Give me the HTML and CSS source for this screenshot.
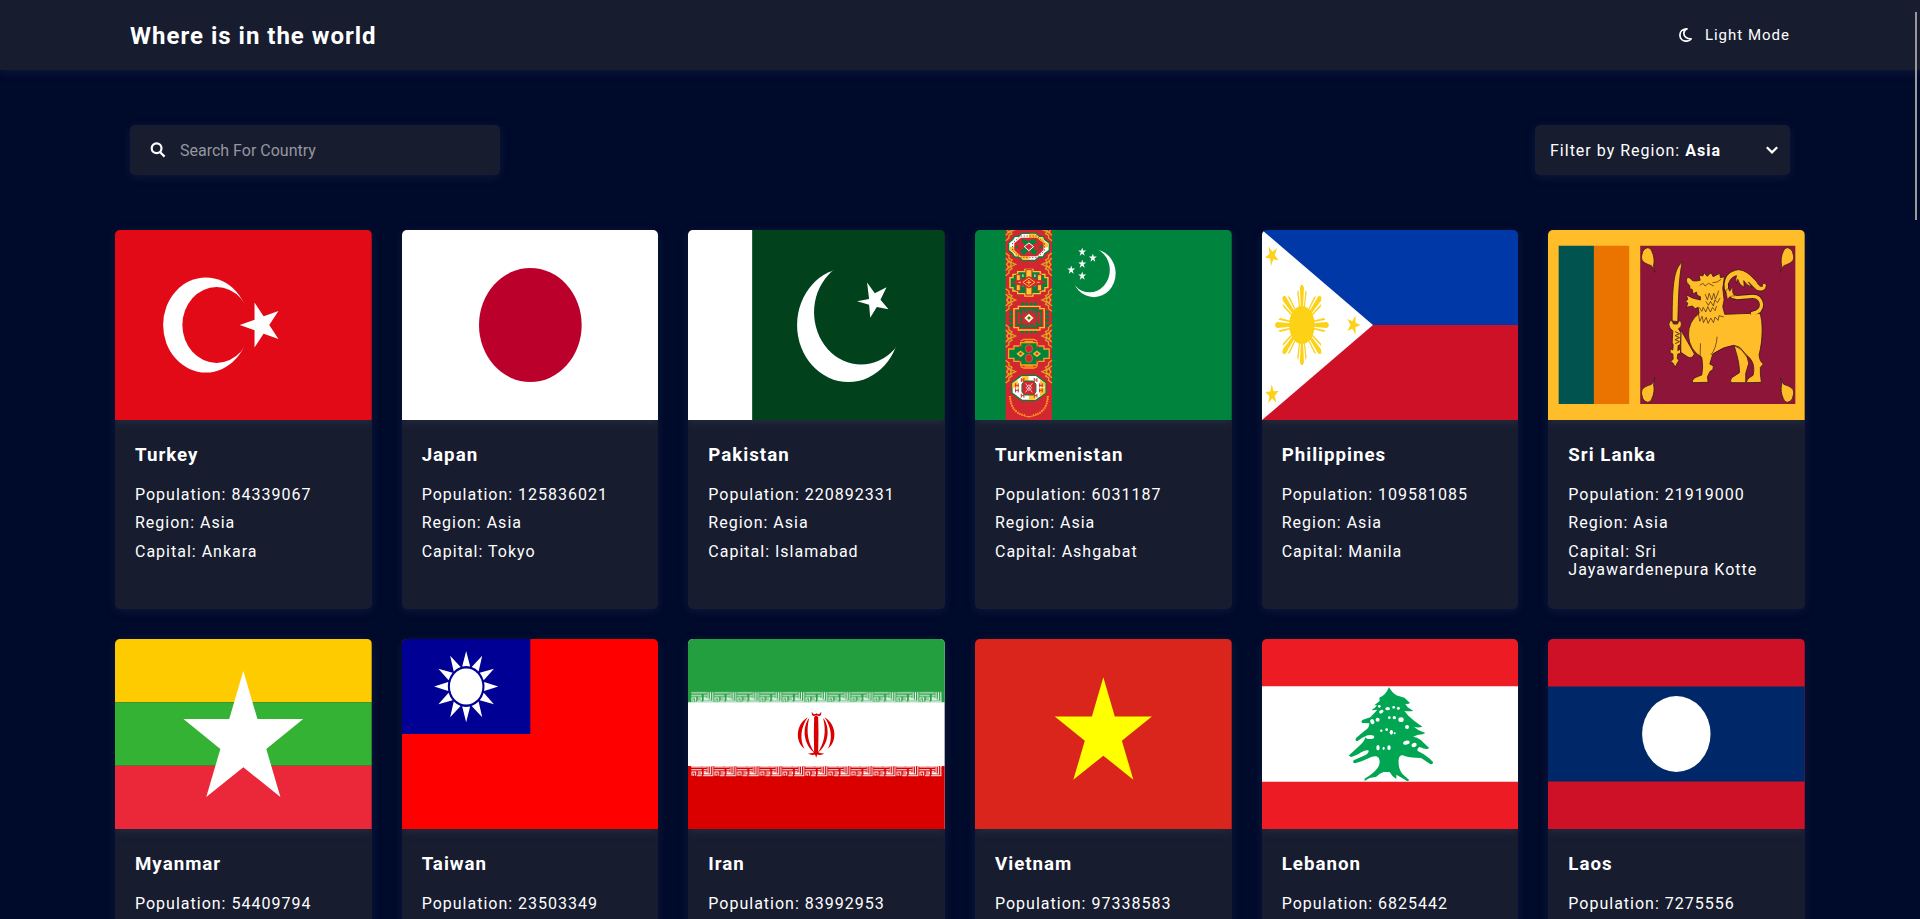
FILE: index.html
```html
<!DOCTYPE html>
<html lang="en">
<head>
<meta charset="utf-8">
<title>Where is in the world</title>
<link rel="stylesheet" href="styles.css">
</head>
<body>
<header class="header">
  <div class="bar">
    <h1 class="title">Where is in the world</h1>
    <button class="mode"><svg class="moon" viewBox="0 0 13 14"><path d="M8 .8C3.600 .8 .9 3.600 .9 7 .9 10.600 3.600 13.200 7.200 13.200 9.400 13.200 11.200 12.400 12.200 10.900 8 11.200 4.800 8.600 4.800 5.200 4.900 3.400 6.300 1.600 8 .8z"/></svg>Light Mode</button>
  </div>
</header>
<main>
  <div class="tools">
    <label class="search">
      <svg class="glass" viewBox="0 0 16 16"><circle cx="6.6" cy="6.3" r="4.9"/><path d="M10.2 10.2L14.6 14.6"/></svg>
      <input class="field" type="text" placeholder="Search For Country">
    </label>
    <div class="filter"><span>Filter by Region: <b>Asia</b></span><svg class="chev" viewBox="0 0 12 8"><path d="M.8 1.200L6 6.400L11.200 1.200"/></svg></div>
  </div>
  <div class="grid">
    <article class="card">
      <svg class="flag" viewBox="0 0 1200 800" preserveAspectRatio="none">
        <defs><polygon id="star" points="0,-1 .2245,-.309 .951,-.309 .363,.118 .588,.809 0,.382 -.588,.809 -.363,.118 -.951,-.309 -.2245,-.309"/></defs>
        <path fill="#e30a17" d="M0 0h1200v800H0z"/><circle cx="425" cy="400" r="200" fill="#fff"/><circle cx="475" cy="400" r="160" fill="#e30a17"/>
        <path fill="#fff" d="M583.3 400l180.9 58.8-111.8-153.9v190.2l111.8-153.9z"/>
      </svg>
      <div class="info"><h2>Turkey</h2><p>Population: 84339067</p><p>Region: Asia</p><p>Capital: Ankara</p></div>
    </article>
    <article class="card">
      <svg class="flag" viewBox="0 0 900 600" preserveAspectRatio="none"><path fill="#fff" d="M0 0h900v600H0z"/><circle cx="450" cy="300" r="180" fill="#ba002b"/></svg>
      <div class="info"><h2>Japan</h2><p>Population: 125836021</p><p>Region: Asia</p><p>Capital: Tokyo</p></div>
    </article>
    <article class="card">
      <svg class="flag" viewBox="0 0 900 600" preserveAspectRatio="none"><path fill="#01411c" d="M0 0h900v600H0z"/><path fill="#fff" d="M0 0h225v600H0z"/><circle cx="562.5" cy="300" r="180" fill="#fff"/><circle cx="607" cy="260" r="165" fill="#01411c"/>
        <path fill="#fff" d="M593 225L635 218 628 166 655 200 696 181 675 220 703 250 662 243 639 277 635 236z"/></svg>
      <div class="info"><h2>Pakistan</h2><p>Population: 220892331</p><p>Region: Asia</p><p>Capital: Islamabad</p></div>
    </article>
    <article class="card">
      <svg class="flag" viewBox="45 30 771 570" preserveAspectRatio="none">
        <defs>
          <g id="corner" fill="none" stroke="#dba522" stroke-width="4"><path d="M0-34l10 8v8l9 5-4 6 15 7-15 7 4 6-9 5v8l-10 8M0-18l6 5 2 7-5 6 5 6-2 7-6 5M9-12l8 12-8 12"/></g>
          <g id="side"><use href="#corner" x="137"/><use href="#corner" transform="matrix(-1 0 0 1 276 0)"/></g>
          <g id="hook" fill="none" stroke-width="3"><path d="M-4-6v12M4-6v12M-4 0h8"/></g>
        </defs>
        <path fill="#00843d" d="M45 30h771v570H45z"/><path fill="#d22730" d="M137 30h139v570H137z"/>
        <use href="#side" y="28"/><use href="#side" y="133"/><use href="#side" y="240"/><use href="#side" y="348"/><use href="#side" y="455"/>
        <g stroke-width="3">
          <path fill="#fff" stroke="#00843d" stroke-width="4" d="M186 40h42l10 9h12l4 10 14 10v22l-14 10-4 10h-12l-12 10h-38l-12-10h-12l-6-10-12-10V69l12-10 6-10h12z"/>
          <path fill="#ffc72c" d="M207 41h18l12 11h12l4 12 13 8v10h-59zM207 81h-58v9l14 9 4 10h12l10 10h18z"/>
          <path fill="#d22730" d="M183 53h48l20 17v20l-20 19h-48l-20-19V70z"/><path fill="#00843d" d="M188 56l18 8 18-8 10 16 16 8-16 9-8 16-19-7-19 7-8-16-17-9 17-8z"/>
          <path fill="#d22730" d="M172 72l14-8 10 12-6 12-14 2zM228 68l12 6-4 18-14-4-6-12zM198 98l9-8 9 8-9 10z"/>
          <path fill="#d22730" stroke="#fff" d="M207 69l14 11-14 12-14-12z"/>
          <path fill="none" stroke="#d22730" stroke-dasharray="4 5" d="M182 48h48l24 21v23l-24 21h-48l-24-21V69z"/>
        </g>
        <g stroke-width="3">
          <path fill="#00843d" stroke="#ffc72c" stroke-width="4" d="M195 148h24v7h22v8h14v10h9v30h-9v10h-14v8h-22v7h-24v-7h-22v-8h-14v-10h-9v-30h9v-10h14v-8h22z"/>
          <path fill="#ffc72c" stroke="#d22730" d="M198 149h18v76h-18zM169 164h12v18h-12zM233 164h12v18h-12zM169 194h12v18h-12zM233 194h12v18h-12z"/>
          <path fill="none" stroke="#fff" stroke-dasharray="8 20" d="M189 163v54M225 163v54"/>
          <path fill="#d22730" stroke="#d22730" d="M155 187l22-4 30-13 30 13 22 4-22 4-30 13-30-13z"/><path fill="none" stroke="#ffc72c" d="M207 174l18 13-18 13-18-13zM200 187h14M207 180v14M175 187h8M231 187h8"/>
        </g>
        <g stroke-width="4" fill="none">
          <path stroke="#00843d" stroke-width="10" stroke-dasharray="9 4" d="M183 253h48M183 334h48M153 272v50M262 272v50"/>
          <path fill="#d22730" stroke="#ffc72c" d="M175 259h65v7h13v57h-13v7h-65v-7h-13v-57h13z"/>
          <path stroke="#00843d" d="M182 267h50v6h12v42h-12v7h-50v-7h-12v-42h12z"/><path stroke="#00843d" stroke-width="8" stroke-dasharray="4 4" d="M184 274h47v41h-47z"/>
          <path stroke="#fff" fill="#ffc72c" d="M207 284l11 10-11 11-11-11z"/><circle cx="207" cy="294" r="4" fill="#00843d" stroke="none"/>
        </g>
        <g stroke-width="4">
          <path fill="#00843d" stroke="#ff9e1b" d="M182 368h50v10h20v9h16v28h-16v9h-20v11h-50v-11h-20v-9h-16v-28h16v-9h20z"/>
          <path fill="none" stroke="#ff9e1b" d="M182 363l10-5h30l10 5M182 439l10 5h30l10-5M194 364h26M194 438h26"/>
          <g fill="#d22730" stroke="#b9a63b" stroke-width="1.500"><ellipse cx="207" cy="386" rx="11" ry="12"/><ellipse cx="207" cy="415" rx="11" ry="12"/><path fill="#ffc72c" d="M182 392l12 9-12 10-12-10zM231 392l12 9-12 10-12-10z"/><path d="M182 396l5 5-5 5-5-5zM231 396l5 5-5 5-5-5z"/></g>
          <path fill="#d22730" d="M171 385l12-10v8zM243 385l-12-10v8zM171 417l12 10v-8zM243 417l-12 10v-8z"/>
        </g>
        <g stroke-width="3">
          <path fill="#fff" stroke="#00843d" stroke-width="4" d="M186 466h42l30 22v31l-30 22h-42l-30-22v-31z"/>
          <path fill="#ffc72c" d="M186 468l20 0v18h-20zM207 522h20v17h-20zM157 490l16-10v23h-16zM240 504h16v14l-16 12zM240 480l16 9v12h-16z"/>
          <path fill="#d22730" stroke="#00843d" d="M194 483h26l8 9v24l-8 9h-26l-8-9v-24z"/>
          <path fill="none" stroke="#fff" stroke-width="2" d="M197 490l20 27M217 490l-20 27M207 494l8 9-8 9-8-9z"/>
          <g stroke="#d22730"><use href="#hook" x="188" y="480"/><use href="#hook" x="227" y="480"/><use href="#hook" x="171" y="496"/><use href="#hook" x="243" y="496"/><use href="#hook" x="171" y="511"/><use href="#hook" x="243" y="511"/><use href="#hook" x="188" y="527"/><use href="#hook" x="227" y="527"/></g>
        </g>
        <g fill="none" stroke="#ff9e1b"><path stroke-width="7" stroke-dasharray="3 4" d="M150 528q2 50 45 58M264 528q-2 50-45 58"/><path stroke-width="2.5" d="M150 528q2 50 45 60l18 3M264 528q-2 50-45 60l-18 3"/></g>
        <ellipse cx="402" cy="160" rx="65.5" ry="71.5" fill="#fff"/><ellipse cx="389" cy="150" rx="61" ry="67" fill="#00843d"/>
        <g fill="#fff"><use href="#star" transform="translate(367 96) scale(12.500 13.500)"/><use href="#star" transform="translate(399 114) scale(12.500 13.500)"/><use href="#star" transform="translate(367 132) scale(12.500 13.500)"/><use href="#star" transform="translate(334 150) scale(12.500 13.500)"/><use href="#star" transform="translate(367 168) scale(12.500 13.500)"/></g>
      </svg>
      <div class="info"><h2>Turkmenistan</h2><p>Population: 6031187</p><p>Region: Asia</p><p>Capital: Ashgabat</p></div>
    </article>
    <article class="card">
      <svg class="flag" viewBox="36 30 768 570" preserveAspectRatio="none">
        <defs><path id="ray" d="M-5-50L-9-112-4-120H4L9-112 5-50zM-13-50L-21-98-16-106-8-50zM13-50L21-98 16-106 8-50z"/></defs>
        <path fill="#0038a8" d="M36 30h768v285H36z"/><path fill="#ce1126" d="M36 315h768v285H36z"/><path fill="#fff" d="M36 30l332 285L36 600z"/>
        <g fill="#fcd116"><g transform="translate(155.500 315) scale(.667 1)"><circle r="57"/><use href="#ray"/><use href="#ray" transform="rotate(45)"/><use href="#ray" transform="rotate(90)"/><use href="#ray" transform="rotate(135)"/><use href="#ray" transform="rotate(180)"/><use href="#ray" transform="rotate(225)"/><use href="#ray" transform="rotate(270)"/><use href="#ray" transform="rotate(315)"/></g>
        <use href="#star" transform="translate(66 107) scale(.69 1) rotate(-28) scale(31)"/><use href="#star" transform="translate(309 315) scale(.69 1) rotate(18) scale(31)"/><use href="#star" transform="translate(66 524) scale(.69 1) rotate(-3) scale(31)"/></g>
      </svg>
      <div class="info"><h2>Philippines</h2><p>Population: 109581085</p><p>Region: Asia</p><p>Capital: Manila</p></div>
    </article>
    <article class="card">
      <svg class="flag" viewBox="54 30 771 570" preserveAspectRatio="none">
        <defs><path id="leaf" d="M375 157C370 143 369 137 356 134 342 128 334 124 335 108L339 94Q344 84 354 83 364 84 366 94C372 106 375 122 371 137z"/></defs>
        <path fill="#ffbe29" d="M54 30h771v570H54z"/><path fill="#00534e" d="M86 77h106v475H86z"/><path fill="#eb7400" d="M192 77h106v475H192z"/><path fill="#8d153a" d="M331 77h466v475H331z"/>
        <g fill="#ffbe29" stroke="#3c1a1c" stroke-width="2.500" stroke-linejoin="round">
          <use href="#leaf"/><use href="#leaf" transform="matrix(-1 0 0 1 1127 0)"/><use href="#leaf" transform="matrix(1 0 0 -1 0 630)"/><use href="#leaf" transform="matrix(-1 0 0 -1 1127 630)"/>
          <path d="M457 127C434 145 427 185 427 303L444 305C446 240 446 180 457 127z"/>
          <path d="M453 330L494 402Q486 418 474 411L453 397z"/>
          <path d="M418 310q0-10 9-8l4 10h12l4-10q8-1 8 10 0 11-9 14l7 12-1 35-7 4-1 15 8-6v14l-8 2-2 14 6 4-6 10-6 12-6-12-8-6 8-6-1-16-8-4v-12l8 4 1-16-3-6 2-36q-10-5-12-18z"/>
          <path fill="none" d="M436 335l13 6-13 6 13 6-13 6 13 6-13 6"/>
          <path d="M612 374C620 400 630 430 629 458L606 473Q600 482 604 488L648 488 648 460 657 430 651 405 640 385z"/>
          <path d="M585 283L690 279C700 300 700 360 688 405Q690 425 701 432L692 442 692 462 695 487 651 488Q648 478 670 466C676 440 670 420 650 405L630 382 612 376Q580 380 549 402L540 432 551 438 549 450 541 454 533 470 535 487 488 488Q485 475 508 468L516 465Q521 440 516 412 478 390 476 345 475 305 508 280L505 262 496 266 488 258 470 262 474 249 467 245 474 238 469 224 488 234 512 240 512 230 502 226 500 216 490 222 487 208 480 207 480 198Q466 185 470 176 478 168 484 178 487 186 511 181L508 165 519 168 523 158 532 169 544 158 550 170 570 160 572 173 584 170 579 205 583 240 579 260z"/>
          <path fill="none" stroke-width="2" d="M506 282l4 22 7-15 4 19 8-16 6 18 8-16 8 14 5-17 9 10 3-14 14 4M508 262l8 12 4-12 8 14 6-16 8 16 6-14 8 10 4-14M526 222l7 18 5-20 8 20 6-20 5 18 10-26M528 244l8 12 6-12 9 14 4-18 8 8 8-14M510 196l10-6 6 8 10-8 16 8M548 188l14-2 12-8M512 370l-1 42M562 350Q560 385 543 405M616 378l20 12 16 22"/>
          <path fill="none" stroke="#3c1a1c" stroke-width="15" stroke-linecap="round" d="M668 280.500Q696 276 695.500 253 691 228 668 229L622 233Q597 231 590 206 586 176 604 163"/>
          <path d="M586 190C588 170 600 152 626 149 650 151 664 168 680 184 687 197 692 201 698 199 697 188 706 187 710 196 708 212 696 217 680 210L656 186 667 202Q650 196 642 182L644 202Q628 196 624 178L620 190Q616 178 620 167 602 172 597 190z"/>
          <path fill="none" stroke="#ffbe29" stroke-width="10" stroke-linecap="round" d="M668 280.500Q696 276 695.500 253 691 228 668 229L622 233Q597 231 590 206 586 176 604 163"/>
          <path stroke-width="1.500" d="M593 238Q590 222 588 210L596 206 600 214 609 200Q605 218 615 228 600 226 593 238z"/>
          <path stroke="none" d="M600 286l90-4-10 12-80 4z"/>
        </g>
      </svg>
      <div class="info"><h2>Sri Lanka</h2><p>Population: 21919000</p><p>Region: Asia</p><p>Capital: Sri Jayawardenepura Kotte</p></div>
    </article>
    <article class="card">
      <svg class="flag" viewBox="0 0 900 600" preserveAspectRatio="none"><path fill="#fecb00" d="M0 0h900v200H0z"/><path fill="#34b233" d="M0 200h900v200H0z"/><path fill="#ea2839" d="M0 400h900v200H0z"/><path fill="#fff" d="M450 101L499.500 253H660L530.500 347 580 499 450 405 320 499 369.500 347 240 253H400.500z"/></svg>
      <div class="info"><h2>Myanmar</h2><p>Population: 54409794</p></div>
    </article>
    <article class="card">
      <svg class="flag" viewBox="0 0 900 600" preserveAspectRatio="none">
        <defs><path id="tip" d="M-14-63L0-112.500 14-63Q0-66-14-63z"/></defs>
        <path fill="#f00" d="M0 0h900v600H0z"/><path fill="#000095" d="M0 0h450v300H0z"/>
        <g fill="#fff" transform="translate(225 150)"><circle r="57"/><use href="#tip"/><use href="#tip" transform="rotate(30)"/><use href="#tip" transform="rotate(60)"/><use href="#tip" transform="rotate(90)"/><use href="#tip" transform="rotate(120)"/><use href="#tip" transform="rotate(150)"/><use href="#tip" transform="rotate(180)"/><use href="#tip" transform="rotate(210)"/><use href="#tip" transform="rotate(240)"/><use href="#tip" transform="rotate(270)"/><use href="#tip" transform="rotate(300)"/><use href="#tip" transform="rotate(330)"/></g>
      </svg>
      <div class="info"><h2>Taiwan</h2><p>Population: 23503349</p></div>
    </article>
    <article class="card">
      <svg class="flag" viewBox="24 27 771 570" preserveAspectRatio="none">
        <defs><pattern id="kufic" x="33" y="0" width="68.500" height="33" patternUnits="userSpaceOnUse"><path fill="none" stroke="#fff" stroke-width="3" d="M1 3H47M1 11H32M38 11H48M51 1V21H38M58 1V24H38M65 1V29H36M3 29V18H14V29M8 29V23M20 18H31V24H20M18 29H32M38 17H46"/></pattern></defs>
        <path fill="#fff" d="M24 27h771v570H24z"/><path fill="#239f40" d="M24 27h771v190H24z"/><path fill="#da0000" d="M24 408h771v189H24z"/>
        <g fill="url(#kufic)"><path transform="translate(0 185)" d="M33 0h754v32H33z"/><path transform="translate(0 408)" d="M33 0h754v32H33z"/></g>
        <path stroke="#fff" stroke-width="1.500" d="M33 216h754"/><path stroke="#fff" stroke-width="2" d="M33 409h754" stroke-dasharray="30 4"/>
        <g fill="#da0000"><path d="M384 262C346 284 346 337 374 356 359 330 362 292 384 262zM388 264C366 292 370 344 405 369 384 340 378 305 388 264zM434 262C472 284 472 337 444 356 459 330 456 292 434 262zM430 264C452 292 448 344 413 369 434 340 440 305 430 264z"/><path d="M403 261l6-5 6 5 1 50-1 55-6 17-6-17-1-55z"/><path d="M396 245q5 12 14 5 8 7 14-5 2 14-8 13-7-5-13 0-9 0-7-13zM384 370q14 2 25-8 11 10 25 8-9 8-25 3-16 5-25-3z"/></g>
      </svg>
      <div class="info"><h2>Iran</h2><p>Population: 83992953</p></div>
    </article>
    <article class="card">
      <svg class="flag" viewBox="0 0 900 600" preserveAspectRatio="none"><path fill="#da251d" d="M0 0h900v600H0z"/><use href="#star" fill="#ff0" transform="translate(450 300) scale(179)"/></svg>
      <div class="info"><h2>Vietnam</h2><p>Population: 97338583</p></div>
    </article>
    <article class="card">
      <svg class="flag" viewBox="36 27 768 570" preserveAspectRatio="none">
        <path fill="#ed1c24" d="M36 27h768v570H36z"/><path fill="#fff" d="M36 169h768v286H36z"/>
        <path fill="#00a651" d="M416 171C422 182 430 194 445 198L462 203 479 219Q472 224 464 221L472 232 489 243Q474 245 462 243 474 260 492 273L516 290Q505 294 491 291L505 301 525 309Q515 315 503 314L488 320Q500 320 512 331L536 354Q530 362 508 351 500 352 501 362L520 373 538 386 548 397Q546 406 538 401L512 384Q482 384 465 379 448 370 445 388C443 412 450 428 463 438L477 451 471 454 450 441 438 434 438 447 427 439 418 426 400 426Q388 429 378 440L358 444 343 453 343 446C360 436 388 418 388 396 388 378 376 376 363 381L334 394 314 400Q304 396 312 390L346 375Q358 368 354 361 342 360 325 372L304 381Q292 378 298 374L330 345Q344 332 347 318 338 321 322 333 312 334 318 323L345 301Q358 292 357 280L336 279Q330 274 338 269L360 262 375 246 381 239 366 241Q364 238 373 234L380 226 372 226 388 213 387 203Q406 196 416 171z"/>
        <g fill="#fff"><ellipse cx="393" cy="245" rx="7" ry="5" transform="rotate(-30 393 245)"/><ellipse cx="412" cy="236" rx="7" ry="5"/><circle cx="430" cy="232" r="4"/><circle cx="444" cy="235" r="4.500"/><circle cx="387" cy="229" r="4"/><ellipse cx="366" cy="275" rx="6" ry="8" transform="rotate(-20 366 275)"/><circle cx="382" cy="269" r="6"/><circle cx="417" cy="263" r="4"/><circle cx="432" cy="263" r="5"/><ellipse cx="452" cy="269" rx="8" ry="7"/><circle cx="470" cy="291" r="6"/><circle cx="393" cy="302" r="3.500"/><circle cx="409" cy="299" r="4"/><ellipse cx="423" cy="307" rx="5" ry="7"/><circle cx="433" cy="310" r="3"/><ellipse cx="359" cy="321" rx="13" ry="6"/><ellipse cx="383" cy="353" rx="5" ry="8"/><ellipse cx="400" cy="355" rx="3" ry="5"/><ellipse cx="416" cy="353" rx="5" ry="7"/><ellipse cx="468" cy="338" rx="10" ry="6" transform="rotate(-15 468 338)"/><ellipse cx="491" cy="345" rx="8" ry="6" transform="rotate(-20 491 345)"/></g>
      </svg>
      <div class="info"><h2>Lebanon</h2><p>Population: 6825442</p></div>
    </article>
    <article class="card">
      <svg class="flag" viewBox="0 0 900 600" preserveAspectRatio="none"><path fill="#ce1126" d="M0 0h900v600H0z"/><path fill="#002868" d="M0 150h900v300H0z"/><circle cx="450" cy="300" r="120" fill="#fff"/></svg>
      <div class="info"><h2>Laos</h2><p>Population: 7275556</p></div>
    </article>
  </div>
</main>
<div class="thumb"></div>
</body>
</html>
```

FILE: styles.css
```css
* { box-sizing: border-box; margin: 0; padding: 0; }
html { height: 100%; overflow: hidden; }
body {
  height: 919px;
  overflow: hidden;
  background: #000a2b;
  color: #fff;
  font-family: Roboto, sans-serif;
  font-size: 16px;
  letter-spacing: 1px;
}
.header { height: 70px; background: #171c2f; box-shadow: 0 2px 10px rgba(50, 60, 100, .3); }
.bar, .tools { display: flex; align-items: center; justify-content: space-between; width: 1660px; margin: 0 auto; }
.bar { height: 70px; }
.title { padding-top: 2px; font-size: 24px; font-weight: 700; letter-spacing: 1px; }
.mode {
  display: flex; align-items: center; gap: 12px;
  border: 0; background: none; color: #fff;
  font: 400 15px Roboto, sans-serif; letter-spacing: 1px;
}
.moon { width: 13px; height: 14px; margin-right: 1px; fill: none; stroke: #fff; stroke-width: 1.7; stroke-linejoin: round; }
.tools { margin-top: 55px; }
.search, .filter {
  display: flex; align-items: center; height: 50px;
  background: #171c2f; border-radius: 5px;
  box-shadow: 0 2px 10px rgba(50, 60, 100, .3);
}
.search { width: 370px; padding-left: 19.5px; gap: 14.5px; }
.glass { width: 16px; height: 16px; fill: none; stroke: #fff; stroke-width: 2.2; }
.field { flex: 1; border: 0; outline: 0; background: none; color: #fff; font: 16px Roboto, sans-serif; }
.field::placeholder { color: #95979f; }
.filter { width: 255px; justify-content: space-between; padding: 0 12px 0 15px; }
.chev { width: 12px; height: 8px; fill: none; stroke: #fff; stroke-width: 2.2; }
.grid {
  display: grid; grid-template-columns: repeat(6, 1fr); gap: 30px;
  width: 1690px; margin: 55px auto 0;
}
.card { height: 379px; background: #171c2f; border-radius: 5px; overflow: hidden; box-shadow: 0 2px 10px rgba(50, 60, 100, .3); }
.flag { display: block; width: 100%; height: 190px; box-shadow: 0 2px 10px rgba(80, 90, 110, .3); }
.info { padding: 24px 20px; }
.info h2 { font-size: 18.72px; line-height: 22px; font-weight: 700; letter-spacing: 1px; margin-bottom: 20px; }
.info p { line-height: 18.4px; margin-bottom: 10px; }
.thumb { position: absolute; top: 12px; right: 3px; width: 2px; height: 208px; background: #999; }
```
